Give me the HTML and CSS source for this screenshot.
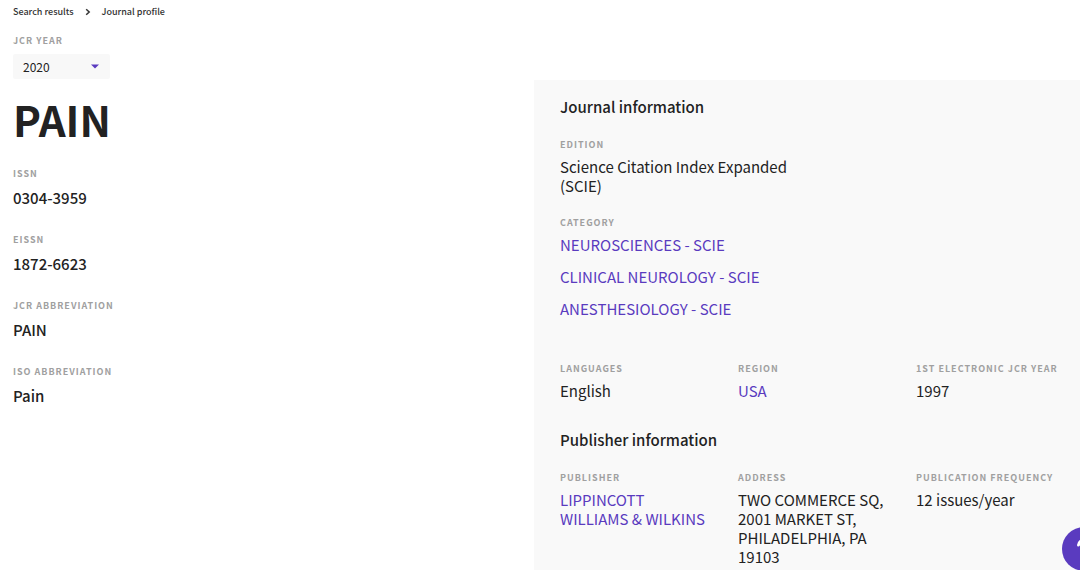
FILE: index.html
```html
<!DOCTYPE html>
<html lang="en">
<head>
    <meta charset="UTF-8">
    <title>PAIN | Journal profile</title>
    <meta name="viewport" content="width=device-width, initial-scale=1">
    <link rel="stylesheet" href="styles.css">
</head>
<body>
    <nav class="breadcrumb" aria-label="Breadcrumb">
        <a href="#">Search results</a>
        <svg class="chevron" width="6" height="8" viewBox="0 0 6 8" aria-hidden="true"><path d="M1.2 1.2 L4.2 4 L1.2 6.8" fill="none" stroke="#333" stroke-width="1.5"/></svg>
        <a href="#">Journal profile</a>
    </nav>
    <div class="page">
        <main class="journal">
            <label class="label" for="jcr_year">JCR YEAR</label>
            <div class="year">
                <select id="jcr_year">
                    <option>2020</option>
                    <option>2019</option>
                    <option>2018</option>
                </select>
                <svg class="arrow" width="8" height="5" viewBox="0 0 8 5" aria-hidden="true"><path d="M0 0.5 H8 L4 4.5 Z" fill="#5a3bbf"/></svg>
            </div>
            <h1>PAIN</h1>
            <dl class="ids">
                <div><dt class="label">ISSN</dt><dd>0304-3959</dd></div>
                <div><dt class="label">EISSN</dt><dd>1872-6623</dd></div>
                <div><dt class="label">JCR ABBREVIATION</dt><dd>PAIN</dd></div>
                <div><dt class="label">ISO ABBREVIATION</dt><dd>Pain</dd></div>
            </dl>
        </main>
        <aside class="info">
            <h2>Journal information</h2>
            <dl class="edition">
                <dt class="label">EDITION</dt>
                <dd>Science Citation Index Expanded (SCIE)</dd>
                <dt class="label">CATEGORY</dt>
                <dd class="categories">
                    <a href="#">NEUROSCIENCES - SCIE</a>
                    <a href="#">CLINICAL NEUROLOGY - SCIE</a>
                    <a href="#">ANESTHESIOLOGY - SCIE</a>
                </dd>
            </dl>
            <dl class="columns">
                <div><dt class="label">LANGUAGES</dt><dd>English</dd></div>
                <div><dt class="label">REGION</dt><dd><a href="#">USA</a></dd></div>
                <div><dt class="label">1ST ELECTRONIC JCR YEAR</dt><dd>1997</dd></div>
            </dl>
            <h2>Publisher information</h2>
            <dl class="columns">
                <div><dt class="label">PUBLISHER</dt><dd><a href="#">LIPPINCOTT WILLIAMS &amp; WILKINS</a></dd></div>
                <div><dt class="label">ADDRESS</dt><dd>TWO COMMERCE SQ, 2001 MARKET ST, PHILADELPHIA, PA 19103</dd></div>
                <div><dt class="label">PUBLICATION FREQUENCY</dt><dd>12 issues/year</dd></div>
            </dl>
        </aside>
    </div>
    <button class="help" type="button" aria-label="Help">
        <svg width="16" height="22" viewBox="0 0 16 22" aria-hidden="true"><path d="M2.5 7 C3 0.5 13.5 0.5 13.5 6.5 C13.5 10.5 8 10.5 8 15" fill="none" stroke="#fff" stroke-width="3" stroke-linecap="round"/><circle cx="8" cy="19.5" r="1.8" fill="#fff"/></svg>
    </button>
</body>
</html>
```
FILE: styles.css
```css
* {
    box-sizing: border-box;
}
body {
    display: flex;
    flex-direction: column;
    min-height: 100vh;
    margin: 0;
    background: #fff;
    color: #222;
    font-family: 'Noto Sans CJK SC', 'Open Sans', sans-serif;
    font-size: 15px;
    line-height: 19px;
}
a {
    color: #5a3bbf;
    text-decoration: none;
}
a:hover {
    text-decoration: underline;
}
h1, h2, dl, dd {
    margin: 0;
}
.breadcrumb {
    display: flex;
    align-items: center;
    gap: 11px;
    padding: 5px 13px 0;
    font-size: 9px;
    font-weight: 500;
    line-height: 14px;
}
.breadcrumb a {
    color: #333;
}
.page {
    display: grid;
    grid-template-columns: 534px 1fr;
    flex: 1;
}
.label {
    display: block;
    color: #a0a0a0;
    font-size: 9px;
    font-weight: bold;
    letter-spacing: 1px;
    line-height: 12px;
}

/* left column */
.journal {
    padding: 16px 13px 24px;
}
.year {
    position: relative;
    width: 97px;
    margin-top: 7px;
}
.year select {
    display: block;
    width: 100%;
    height: 25px;
    padding: 0 10px;
    border: none;
    border-radius: 2px;
    background: #f8f8f8;
    color: #222;
    font-family: inherit;
    font-size: 12px;
    appearance: none;
}
.arrow {
    position: absolute;
    top: 10px;
    right: 11px;
    pointer-events: none;
}
h1 {
    margin-top: 16px;
    font-size: 42px;
    font-weight: bold;
    line-height: 48px;
}
.ids {
    display: grid;
    gap: 27px;
    margin-top: 25px;
}
.ids dd {
    font-weight: 500;
}
.label + dd {
    margin-top: 6px;
}
.ids .label + dd {
    margin-top: 8px;
}

/* right panel */
.info {
    margin-top: 61px;
    padding: 17px 0 2px 26px;
    background: #f9f9f9;
}
h2 {
    margin-bottom: 22px;
    font-size: 15px;
    font-weight: 500;
    line-height: 20px;
}
.edition {
    width: 50%;
}
.edition dd {
    margin-bottom: 22px;
}
.edition .categories {
    display: grid;
    gap: 13px;
    margin-bottom: 45px;
}
.columns {
    display: grid;
    grid-template-columns: repeat(3, 1fr);
    gap: 14px;
}
.columns div {
    padding-right: 14px;
}
.columns + h2 {
    margin-top: 30px;
}

/* floating help button, tucked into the corner */
.help {
    position: fixed;
    right: -26px;
    bottom: -1px;
    display: flex;
    align-items: center;
    justify-content: center;
    width: 44px;
    height: 44px;
    padding: 0;
    border: none;
    border-radius: 50%;
    background: #5a3bbf;
    cursor: pointer;
}
```
